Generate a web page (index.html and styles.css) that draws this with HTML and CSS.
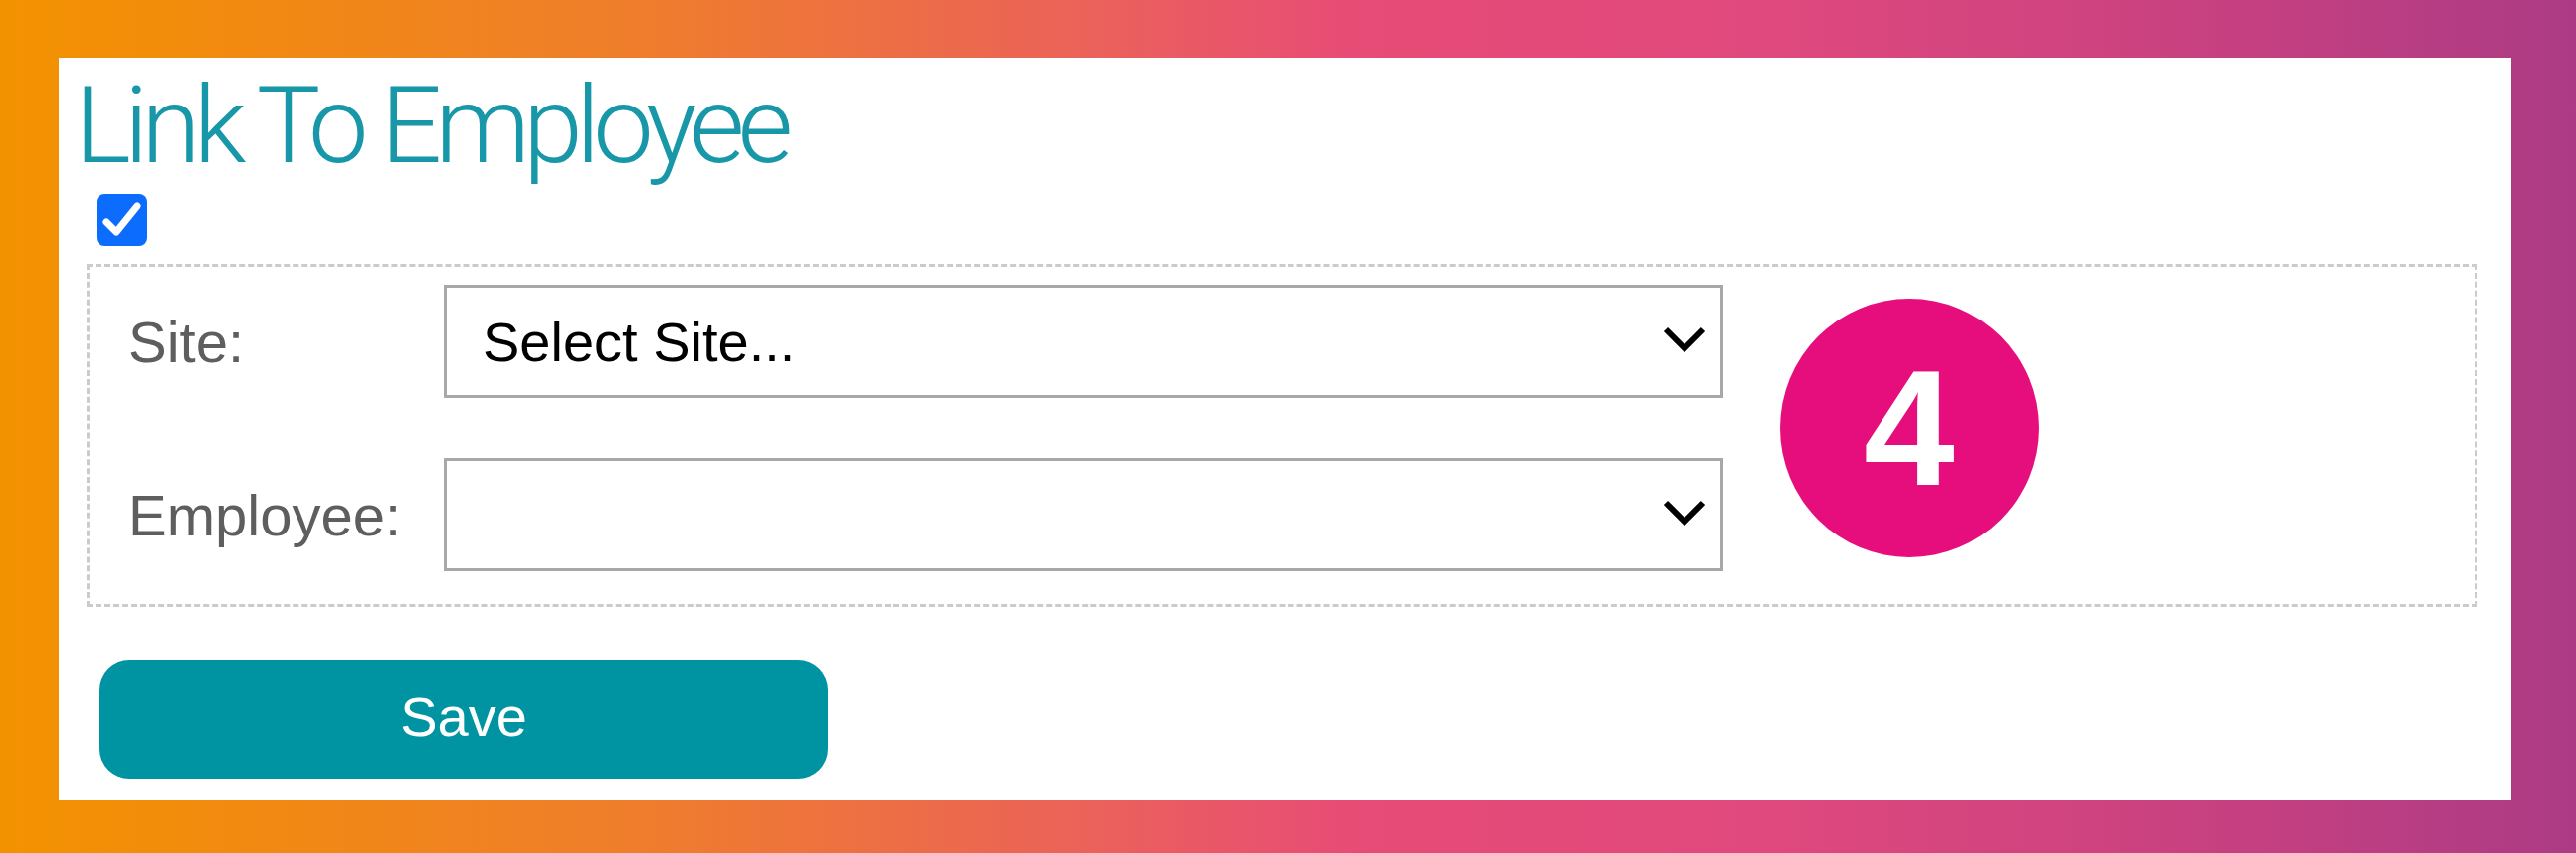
FILE: index.html
```html
<!DOCTYPE html>
<html lang="en">

<head>
    <meta charset="UTF-8">
    <meta name="viewport" content="width=device-width, initial-scale=1.0">
    <title>Link To Employee</title>
    <link rel="stylesheet" href="styles.css">
</head>

<body>

    <div class="panel">
        <h1 class="title">Link To Employee</h1>

        <!-- Link toggle -->
        <label class="check">
            <span class="check-box">
                <svg width="51" height="52" viewBox="0 0 51 52">
                    <polyline points="10,28 20,38 41,12" fill="none" stroke="#fff" stroke-width="7" stroke-linecap="round" stroke-linejoin="round"/>
                </svg>
            </span>
        </label>

        <!-- Site / Employee -->
        <div class="link-box">
            <div class="link-fields">
                <label class="field-label" for="site">Site:</label>
                <div class="select-wrap">
                    <select id="site">
                        <option>Select Site...</option>
                    </select>
                    <svg class="chevron" width="44" height="28" viewBox="0 0 44 28">
                        <polyline points="3,4 22,23 41,4" fill="none" stroke="#000" stroke-width="6"/>
                    </svg>
                </div>

                <label class="field-label" for="employee">Employee:</label>
                <div class="select-wrap">
                    <select id="employee">
                        <option></option>
                    </select>
                    <svg class="chevron" width="44" height="28" viewBox="0 0 44 28">
                        <polyline points="3,4 22,23 41,4" fill="none" stroke="#000" stroke-width="6"/>
                    </svg>
                </div>
            </div>

            <div class="step">4</div>
        </div>

        <button class="save-btn">Save</button>
    </div>

</body>

</html>
```

FILE: styles.css
```css
* {
    box-sizing: border-box;
}

body {
    margin: 0;
    padding: 58px 65px 53px 59px;
    min-height: 100vh;
    font-family: 'Liberation Sans', Arial, sans-serif;
    background: linear-gradient(90deg, #f39200 0%, #ef7d2c 25%, #eb6259 42%, #e74b77 53%, #e0497d 68%, #c94180 85%, #ac3b85 100%);
}

.panel {
    background: #fff;
    padding: 14px 34px 21px 28px;
}

.title {
    margin: 0 0 15px -12px;
    font-family: Roboto, 'Liberation Sans', sans-serif;
    font-weight: 300;
    font-size: 108px;
    line-height: 108px;
    letter-spacing: -7px;
    color: #1797a7;
}

.check {
    display: block;
    width: 51px;
    height: 52px;
    margin-left: 10px;
}

.check-box {
    display: block;
    width: 51px;
    height: 52px;
    background: #0b6cfd;
    border-radius: 8px;
}

.check-box svg {
    display: block;
}

/* dashed group */
.link-box {
    margin-top: 18px;
    border: 3px dashed #cbcbcb;
    padding: 18px 0 33px 39px;
    display: flex;
    align-items: center;
}

.link-fields {
    display: grid;
    grid-template-columns: 317px 1286px;
    grid-auto-rows: 114px;
    row-gap: 60px;
    align-items: center;
}

.field-label {
    font-size: 58px;
    color: #5e5e5e;
}

.select-wrap {
    height: 114px;
    border: 3px solid #a8a8a8;
    display: flex;
    align-items: center;
    padding: 0 14px 0 36px;
}

.select-wrap select {
    flex: 1;
    appearance: none;
    -webkit-appearance: none;
    border: none;
    background: transparent;
    padding: 0;
    font-family: 'Liberation Sans', Arial, sans-serif;
    font-size: 56px;
    color: #000;
    outline: none;
}

.chevron {
    display: block;
    margin-top: -4px;
}

.step {
    width: 260px;
    height: 260px;
    margin-left: 57px;
    border-radius: 50%;
    background: #e60e7c;
    color: #fff;
    font-weight: bold;
    font-size: 165px;
    display: flex;
    align-items: center;
    justify-content: center;
}

.save-btn {
    display: block;
    margin: 53px 0 0 13px;
    width: 732px;
    height: 120px;
    padding: 0 0 8px;
    border: none;
    border-radius: 30px;
    background: #0094a3;
    color: #fff;
    font-family: 'Liberation Sans', Arial, sans-serif;
    font-size: 56px;
    cursor: pointer;
}
```
